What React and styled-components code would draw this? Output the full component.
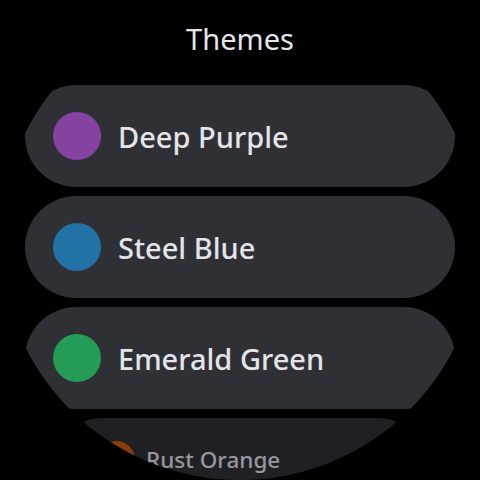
import React from 'react'
import styled, { createGlobalStyle } from 'styled-components'

const GlobalStyle = createGlobalStyle`
  html, body {
    margin: 0;
    padding: 0;
    background: #000;
  }
  * {
    box-sizing: border-box;
  }
`

const Screen = styled.div`
  width: 480px;
  height: 480px;
  border-radius: 50%;
  overflow: hidden;
  background: #000;
  display: flex;
  flex-direction: column;
  align-items: center;
  font-family: "Noto Sans", Roboto, sans-serif;
`

const Title = styled.h1`
  margin: 22px 0 29px 0;
  height: 34px;
  line-height: 34px;
  font-size: 29px;
  font-weight: 400;
  color: #e6e6ea;
`

const List = styled.div`
  display: flex;
  flex-direction: column;
  align-items: center;
  gap: 9px;
`

const Pill = styled.div`
  width: ${(p) => (p.$dim ? '360px' : '430px')};
  height: ${(p) => (p.$dim ? '82px' : '102px')};
  flex-shrink: 0;
  border-radius: 52px;
  background: ${(p) => (p.$dim ? '#1f2024' : '#2f3035')};
  display: flex;
  align-items: center;
  padding-left: ${(p) => (p.$dim ? '38px' : '28px')};
  gap: ${(p) => (p.$dim ? '11px' : '17px')};
`

const Dot = styled.span`
  width: ${(p) => (p.$dim ? '37px' : '48px')};
  height: ${(p) => (p.$dim ? '37px' : '48px')};
  border-radius: 50%;
  flex-shrink: 0;
  background: ${(p) => p.$color};
`

const Label = styled.span`
  font-size: ${(p) => (p.$dim ? '22.5px' : '29px')};
  font-weight: 500;
  color: ${(p) => (p.$dim ? '#97979c' : '#e4e4e9')};
  white-space: nowrap;
`

const themes = [
  { name: 'Deep Purple', color: '#8642a1' },
  { name: 'Steel Blue', color: '#2372a5' },
  { name: 'Emerald Green', color: '#249b57' },
  { name: 'Rust Orange', color: '#8a3d0b', dim: true },
]

export default function App() {
  return (
    <>
      <GlobalStyle />
      <Screen>
        <Title>Themes</Title>
        <List>
          {themes.map((t) => (
            <Pill key={t.name} $dim={t.dim}>
              <Dot $color={t.color} $dim={t.dim} />
              <Label $dim={t.dim}>{t.name}</Label>
            </Pill>
          ))}
        </List>
      </Screen>
    </>
  )
}
